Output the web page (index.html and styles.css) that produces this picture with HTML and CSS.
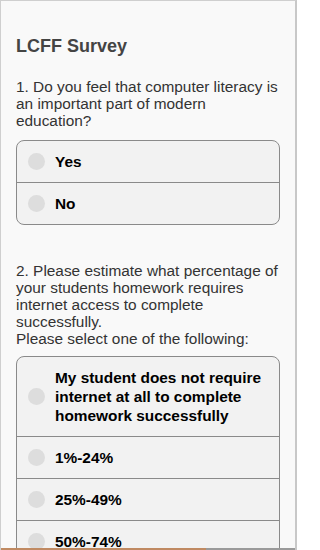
FILE: index.html
```html
<!DOCTYPE html>
<html lang="en">
<head>
<meta charset="utf-8">
<title>LCFF Survey</title>
<link rel="stylesheet" href="styles.css">
</head>
<body>
<div class="frame">
  <div class="screen">
    <main class="content">
      <h1 class="title">LCFF Survey</h1>
      <section class="question">
        <p class="prompt">1. Do you feel that computer literacy is an important part of modern education?</p>
        <ul class="choices">
          <li class="choice"><span class="radio"></span><span class="label">Yes</span></li>
          <li class="choice"><span class="radio"></span><span class="label">No</span></li>
        </ul>
      </section>
      <section class="question q2">
        <p class="prompt">2. Please estimate what percentage of your students homework requires internet access to complete successfully.<br>Please select one of the following:</p>
        <ul class="choices">
          <li class="choice"><span class="radio"></span><span class="label">My student does not require internet at all to complete homework successfully</span></li>
          <li class="choice"><span class="radio"></span><span class="label">1%-24%</span></li>
          <li class="choice"><span class="radio"></span><span class="label">25%-49%</span></li>
          <li class="choice"><span class="radio"></span><span class="label">50%-74%</span></li>
        </ul>
      </section>
    </main>
  </div>
  <div class="bottombar"><div class="progress" style="width:205px"></div></div>
</div>
</body>
</html>
```

FILE: styles.css
```css
html, body {
  margin: 0;
  padding: 0;
  background: #ffffff;
}
.frame {
  box-sizing: border-box;
  width: 297px;
  height: 550px;
  display: flex;
  flex-direction: column;
  border-top: 1px solid #cfcfcf;
  border-left: 1px solid #cfcfcf;
  border-right: 2px solid #c8c8c8;
  background: #f9f9f9;
  overflow: hidden;
  font-family: "Liberation Sans", Arial, Helvetica, sans-serif;
}
.screen {
  flex: 1;
  min-height: 0;
  overflow: hidden;
  border-bottom-left-radius: 4px;
}
.content {
  padding: 34px 15px 0 15px;
}
.title {
  margin: 0;
  font-size: 18px;
  line-height: 22px;
  font-weight: bold;
  color: #444444;
}
.question {
  margin-top: 21px;
}
.question.q2 {
  margin-top: 37px;
}
.prompt {
  margin: 0 0 11px 0;
  font-size: 15.4px;
  line-height: 17px;
  color: #333333;
}
.q2 .prompt {
  margin-bottom: 9px;
}
.choices {
  list-style: none;
  margin: 0;
  padding: 0;
  background: #f2f2f2;
  border: 1px solid #8a8a8a;
  border-radius: 8px;
}
.choice {
  display: flex;
  align-items: center;
  gap: 10px;
  padding: 11px 12px 11px 11px;
  border-top: 1px solid #8a8a8a;
}
.choice:first-child {
  border-top: none;
}
.radio {
  flex: none;
  width: 17px;
  height: 17px;
  border-radius: 50%;
  background: #dddddd;
}
.label {
  font-size: 15.4px;
  line-height: 19px;
  font-weight: bold;
  color: #000000;
}
.bottombar {
  flex: none;
  height: 2px;
  background: #9a9a9a;
}
.progress {
  height: 100%;
  background: #c08a62;
}
```
